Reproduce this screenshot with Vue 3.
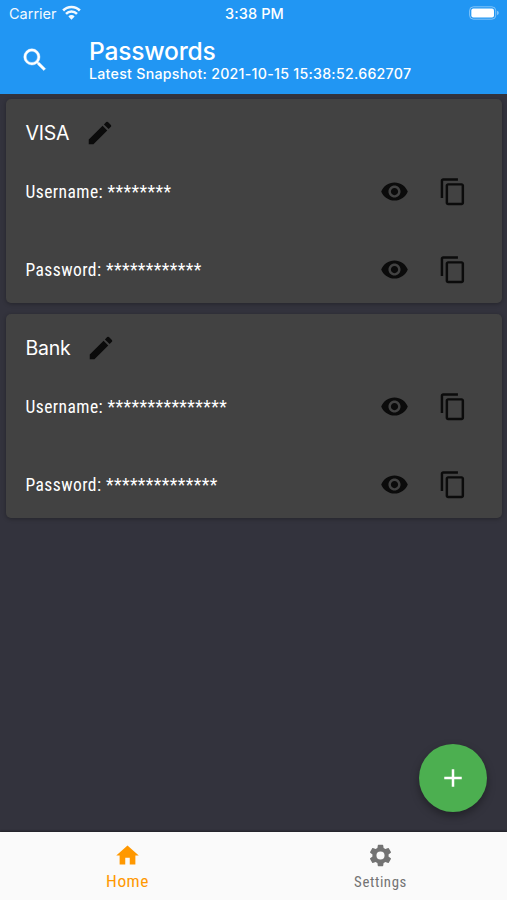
<script setup>
const cards = [
  { title: 'VISA', rows: [['Username:', '********'], ['Password:', '************']] },
  { title: 'Bank', rows: [['Username:', '***************'], ['Password:', '**************']] },
]
</script>

<template>
  <div class="screen">
    <header class="top">
      <div class="status">
        <div class="carrier">
          <span>Carrier</span>
          <svg class="wifi" viewBox="0 0 20 15">
            <path d="M1.2 5.4a12.4 12.4 0 0 1 17.6 0M4.2 8.9a8.2 8.2 0 0 1 11.6 0" fill="none" stroke="#fff" stroke-width="2.7" />
            <path d="M6.7 11.6a4.7 4.7 0 0 1 6.6 0L10 15z" fill="#fff" />
          </svg>
        </div>
        <span class="clock">3:38 PM</span>
        <svg class="battery" viewBox="0 0 32 14">
          <rect x=".6" y=".6" width="27" height="12.8" rx="4" fill="none" stroke="#fff" stroke-opacity=".45" />
          <rect x="2.4" y="2.4" width="23.4" height="9.2" rx="2" fill="#fff" />
          <path d="M29 4.8v4.4q1.7-.7 1.7-2.2T29 4.8z" fill="#fff" fill-opacity=".5" />
        </svg>
      </div>
      <div class="bar">
        <svg class="search" viewBox="0 0 24 24"><path fill="#fff" stroke="#fff" stroke-width=".3" d="M15.5 14h-.79l-.28-.27A6.471 6.471 0 0 0 16 9.5 6.5 6.5 0 1 0 9.5 16c1.61 0 3.09-.59 4.23-1.57l.27.28v.79l5 4.99L20.49 19l-4.99-5zm-6 0C7.01 14 5 11.99 5 9.5S7.01 5 9.5 5 14 7.01 14 9.5 11.99 14 9.5 14z" /></svg>
        <div class="heading">
          <h1>Passwords</h1>
          <p>Latest Snapshot: 2021-10-15 15:38:52.662707</p>
        </div>
      </div>
    </header>

    <main>
      <section v-for="card in cards" :key="card.title" class="card">
        <div class="title">
          <h2>{{ card.title }}</h2>
          <svg class="icon" viewBox="0 0 24 24"><path d="M3 17.25V21h3.75L17.81 9.94l-3.75-3.75L3 17.25zM20.71 7.04a1 1 0 0 0 0-1.41l-2.34-2.34a1 1 0 0 0-1.41 0l-1.83 1.83 3.75 3.75 1.83-1.83z" /></svg>
        </div>
        <div v-for="row in card.rows" :key="row[0]" class="row">
          <span class="label">{{ row[0] }} {{ row[1] }}</span>
          <svg class="icon eye" viewBox="0 0 24 24"><path d="M12 4.5C7 4.5 2.73 7.61 1 12c1.73 4.39 6 7.5 11 7.5s9.27-3.11 11-7.5c-1.73-4.39-6-7.5-11-7.5zM12 17c-2.76 0-5-2.24-5-5s2.24-5 5-5 5 2.24 5 5-2.24 5-5 5zm0-8c-1.66 0-3 1.34-3 3s1.34 3 3 3 3-1.34 3-3-1.34-3-3-3z" /></svg>
          <svg class="icon copy" viewBox="0 0 24 24"><path d="M16 1H4c-1.1 0-2 .9-2 2v14h2V3h12V1zm3 4H8c-1.1 0-2 .9-2 2v14c0 1.1.9 2 2 2h11c1.1 0 2-.9 2-2V7c0-1.1-.9-2-2-2zm0 16H8V7h11v14z" /></svg>
        </div>
      </section>
      <button class="fab" aria-label="Add">
        <svg viewBox="0 0 24 24"><path fill="#fff" d="M19 13h-6v6h-2v-6H5v-2h6V5h2v6h6v2z" /></svg>
      </button>
    </main>

    <nav>
      <a class="tab active">
        <svg viewBox="0 0 24 24"><path d="M10 20v-6h4v6h5v-8h3L12 3 2 12h3v8z" /></svg>
        <span>Home</span>
      </a>
      <a class="tab">
        <svg viewBox="0 0 24 24"><path d="M19.14 12.94c.04-.3.06-.61.06-.94 0-.32-.02-.64-.07-.94l2.03-1.58a.49.49 0 0 0 .12-.61l-1.92-3.32a.488.488 0 0 0-.59-.22l-2.39.96c-.5-.38-1.03-.7-1.62-.94l-.36-2.54a.484.484 0 0 0-.48-.41h-3.84c-.24 0-.43.17-.47.41l-.36 2.54c-.59.24-1.13.57-1.62.94l-2.39-.96c-.22-.08-.47 0-.59.22L2.74 8.87c-.12.21-.08.47.12.61l2.03 1.58c-.05.3-.09.63-.09.94s.02.64.07.94l-2.03 1.58a.49.49 0 0 0-.12.61l1.92 3.32c.12.22.37.29.59.22l2.39-.96c.5.38 1.03.7 1.62.94l.36 2.54c.05.24.24.41.48.41h3.84c.24 0 .44-.17.47-.41l.36-2.54c.59-.24 1.13-.56 1.62-.94l2.39.96c.22.08.47 0 .59-.22l1.92-3.32c.12-.22.07-.47-.12-.61l-2.01-1.58zM12 15.6A3.6 3.6 0 1 1 12 8.4a3.6 3.6 0 0 1 0 7.2z" /></svg>
        <span>Settings</span>
      </a>
    </nav>
  </div>
</template>

<style>
body { margin: 0; }
</style>

<style scoped>
.screen { width: 507px; height: 900px; display: flex; flex-direction: column; background: #33333d; font-family: Inter, sans-serif; color: #fff; overflow: hidden; }
h1, h2, p { margin: 0; font-weight: 400; }
svg { display: block; flex: none; }
.top { height: 94px; background: #2196f3; flex: none; }
.status { height: 27px; padding: 0 7px 0 9px; display: grid; grid-template-columns: 1fr auto 1fr; align-items: center; font-size: 14.5px; }
.carrier { display: flex; align-items: center; gap: 5px; opacity: .95; }
.wifi { width: 19px; height: 15px; margin-top: -2px; }
.clock { font-weight: 550; letter-spacing: .1px; }
.battery { width: 31px; height: 14px; justify-self: end; margin-top: -1px; }
.bar { display: flex; padding-left: 20px; }
.search { width: 30px; height: 30px; margin-top: 17.5px; }
.heading { margin-left: 39px; padding-top: 8px; }
h1 { font-size: 24.6px; line-height: 32px; font-weight: 450; letter-spacing: -.2px; }
p { font-size: 14.2px; line-height: 14px; font-weight: 450; letter-spacing: .27px; white-space: nowrap; }
main { flex: 1; position: relative; padding: 5px 5px 0 6px; display: flex; flex-direction: column; gap: 11px; }
.card { height: 204px; border-radius: 5px; background: #424242; box-shadow: 0 1px 4px rgba(0, 0, 0, .3); padding-left: 19.5px; }
.title { height: 54px; padding-top: 7px; display: flex; align-items: center; gap: 15.5px; }
h2 { font-size: 19.5px; letter-spacing: -.25px; }
.icon { width: 30px; height: 30px; fill: #0b0b0b; }
.row { height: 78px; padding-right: 34px; display: flex; align-items: center; gap: 29px; }
.title + .row { margin-top: -7px; }
.label { flex: 1; font-family: "Roboto Condensed", Roboto, sans-serif; font-stretch: 75%; font-size: 17.5px; font-weight: 450; letter-spacing: .44px; white-space: nowrap; }
.eye { width: 29px; height: 29px; margin-top: -1px; }
.copy { height: 29.5px; margin-top: -1px; }
.fab { position: absolute; right: 20px; bottom: 20px; width: 68px; height: 68px; border: 0; border-radius: 50%; background: #4caf50; display: grid; place-items: center; padding: 0; box-shadow: 0 4px 9px rgba(0, 0, 0, .35); }
.fab svg { width: 30px; height: 30px; }
nav { height: 68px; flex: none; display: flex; background: #fafafa; box-shadow: 0 -1px 2px rgba(0, 0, 0, .4); }
.tab { flex: 1; display: flex; flex-direction: column; align-items: center; padding-top: 10px; color: #737373; fill: #737373; font-family: "Roboto Condensed", Roboto, sans-serif; font-stretch: 75%; font-size: 14.8px; letter-spacing: .6px; }
.tab svg { width: 27px; height: 27px; }
.tab span { line-height: 24px; margin-top: 1px; }
.active { color: #ff9800; fill: #ff9800; font-size: 17.4px; font-weight: 450; letter-spacing: .5px; padding-left: 1px; }
.active span { margin-top: 0; }
</style>
